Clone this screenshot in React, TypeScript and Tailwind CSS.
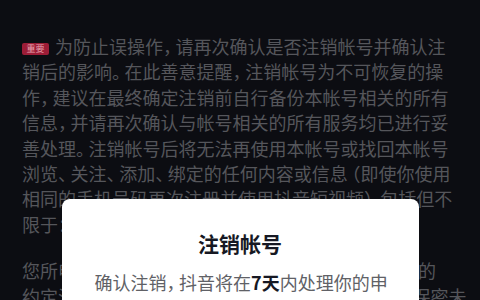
// punctuation whose glyph sits in the left part of the em box: trim blank space on the right
const TRIM_RIGHT = '，。）：、';
// opening bracket sits on the right: trim blank space on the left
const TRIM_LEFT = '（';

const Txt = ({ s }: { s: string }) => (
  <>
    {[...s].map((c, i) =>
      TRIM_RIGHT.includes(c) ? (
        <span key={i} className="tracking-[-0.3em]">
          {c}
        </span>
      ) : TRIM_LEFT.includes(c) ? (
        <span key={i} className="ml-[-0.3em]">
          {c}
        </span>
      ) : (
        <span key={i}>{c}</span>
      )
    )}
  </>
);

const firstPara = [
  '销后的影响。在此善意提醒，注销帐号为不可恢复的操',
  '作，建议在最终确定注销前自行备份本帐号相关的所有',
  '信息，并请再次确认与帐号相关的所有服务均已进行妥',
  '善处理。注销帐号后将无法再使用本帐号或找回本帐号',
  '浏览、关注、添加、绑定的任何内容或信息（即使你使用',
  '相同的手机号码再次注册并使用抖音短视频），包括但不',
  '限于：',
];

const secondPara = [
  '您所申请注销的帐号应当是依照抖音用户服务协议的',
  '约定注册并由你本人使用的帐号，且帐号处于安全保密未',
];

export default function App() {
  return (
    <div className="relative h-[300px] w-[480px] overflow-hidden bg-[#0c0d12] font-['Noto_Sans_CJK_SC',sans-serif]">
      <div className="flex flex-col gap-[21px] whitespace-nowrap pl-[22px] pt-[34px] text-[18px] leading-[25.4px] text-[#55565b]">
        <div>
          <p>
            <span className="mr-[6px] inline-flex h-[12px] w-[27px] items-center justify-center rounded-[2px] bg-[#9c1d37] align-[2px] text-[9px] leading-none text-[#e7a3b0]">
              重要
            </span>
            <Txt s="为防止误操作，请再次确认是否注销帐号并确认注" />
          </p>
          {firstPara.map((line) => (
            <p key={line}>
              <Txt s={line} />
            </p>
          ))}
        </div>
        <div>
          {secondPara.map((line) => (
            <p key={line}>
              <Txt s={line} />
            </p>
          ))}
        </div>
      </div>

      {/* confirm dialog over the dimmed page */}
      <div className="absolute inset-x-0 top-[199px] flex justify-center">
        <div className="h-[160px] w-[357px] rounded-[8px] bg-white px-[33px] pt-[30px]">
          <h2 className="text-center text-[21px] font-bold leading-[28px] text-[#161823]">注销帐号</h2>
          <div className="mt-[12px] whitespace-nowrap text-[18px] leading-[27px] text-[#606166]">
            <p>
              <Txt s="确认注销，抖音将在" />
              <span className="font-bold text-[#161823]">7天</span>
              <Txt s="内处理你的申" />
            </p>
            <p>
              <Txt s="请，并在期满后注销你的帐号及相关" />
            </p>
          </div>
        </div>
      </div>
    </div>
  );
}
